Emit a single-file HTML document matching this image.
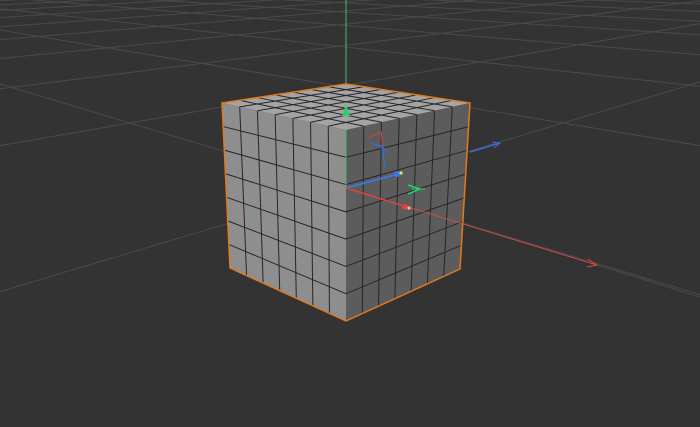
<!DOCTYPE html>
<html><head><meta charset="utf-8"><style>
html,body{margin:0;padding:0;background:#333;width:700px;height:427px;overflow:hidden;position:relative}
svg{display:block;overflow:hidden;position:absolute;left:0;top:0}
script{display:none}
</style></head><body>
<svg id="s" width="700" height="427" viewBox="0 0 700 427" xmlns="http://www.w3.org/2000/svg">
<rect width="700" height="427" fill="#333"/>
<g id="grid" stroke="#4a4a4a" stroke-width="1" fill="none"></g>
<line x1="597" y1="265" x2="700" y2="297" stroke="#4a4a4a" stroke-width="1"/>
<line x1="346" y1="0" x2="346" y2="188" stroke="#3fbf6f" stroke-width="1"/>
<g id="cube"></g>
<line x1="346" y1="188" x2="597" y2="265" stroke="#d04848" stroke-width="1"/>
<polyline points="588,259 597,265 587,267" fill="none" stroke="#d04848" stroke-width="1"/>
<line x1="470" y1="152" x2="500" y2="143" stroke="#3a6ad0" stroke-width="1.5"/>
<polyline points="492,142 500,143 494,148" fill="none" stroke="#3a6ad0" stroke-width="1"/>
<line x1="346" y1="130" x2="346" y2="188" stroke="#3fbf6f" stroke-width="1"/>
<polygon points="346,104 342,116 350,116" fill="#2ecc71"/>
<line x1="346" y1="188" x2="398" y2="174" stroke="#3a78e0" stroke-width="1.8"/>
<circle cx="397" cy="174" r="3" fill="#3a78e0"/><circle cx="401" cy="173" r="1.6" fill="#f0d890"/>
<line x1="346" y1="188" x2="404" y2="206" stroke="#e04040" stroke-width="1.5"/>
<circle cx="405" cy="207" r="3" fill="#e04040"/><circle cx="409" cy="208" r="1.6" fill="#f0c080"/>
<polyline points="368,138 381,132 383,146" fill="none" stroke="#d04040" stroke-width="1.2"/>
<polyline points="371,143 382,147 385,168" fill="none" stroke="#3a6ad0" stroke-width="1.5"/>
<line x1="380" y1="145" x2="388" y2="152" stroke="#3a6ad0" stroke-width="1.5"/>
<polyline points="408,185 420,189 408,194" fill="none" stroke="#2ecc71" stroke-width="1.5"/>
<line x1="412" y1="189" x2="425" y2="189" stroke="#2ecc71" stroke-width="1.2"/>
</svg>
<script>
(function(){
var NS="http://www.w3.org/2000/svg";
function solve(A,b){var n=b.length;for(var i=0;i<n;i++){var p=i;for(var r=i+1;r<n;r++)if(Math.abs(A[r][i])>Math.abs(A[p][i]))p=r;var t=A[i];A[i]=A[p];A[p]=t;var tb=b[i];b[i]=b[p];b[p]=tb;for(var r=i+1;r<n;r++){var f=A[r][i]/A[i][i];for(var c=i;c<n;c++)A[r][c]-=f*A[i][c];b[r]-=f*b[i];}}var x=new Array(n);for(var i=n-1;i>=0;i--){var s=b[i];for(var c=i+1;c<n;c++)s-=A[i][c]*x[c];x[i]=s/A[i][i];}return x;}
function homog(src,dst){var A=[],b=[];for(var i=0;i<4;i++){var u=src[i][0],v=src[i][1],x=dst[i][0],y=dst[i][1];A.push([u,v,1,0,0,0,-u*x,-v*x]);b.push(x);A.push([0,0,0,u,v,1,-u*y,-v*y]);b.push(y);}var h=solve(A,b);h.push(1);return h;}
var H=homog([[0,0],[-1,0],[0,1],[-1,2]],[[346,188],[130,123],[563,123],[480,62]]);
function P(u,v){var w=H[6]*u+H[7]*v+1;return [(H[0]*u+H[1]*v+H[2])/w,(H[3]*u+H[4]*v+H[5])/w,w];}
var w0=P(0,0)[2];
var g=document.getElementById("grid");
function line(pts){var d="",first=true;for(var i=0;i<pts.length;i++){var p=pts[i];if(p[2]/w0<0.2||p[0]<-200||p[0]>900||p[1]<-200||p[1]>700){first=true;continue;}d+=(first?"M":"L")+p[0].toFixed(1)+" "+p[1].toFixed(1);first=false;}if(d){var e=document.createElementNS(NS,"path");e.setAttribute("d",d);g.appendChild(e);}}
for(var k=-12;k<=12;k++){var a=[],b=[];for(var t=-12;t<=12;t+=0.02){a.push(P(k,t));b.push(P(t,k));}line(a);line(b);}
var c=document.getElementById("cube");
function poly(pts,fill,stroke,sw){var e=document.createElementNS(NS,"polygon");e.setAttribute("points",pts.map(function(p){return p[0]+","+p[1]}).join(" "));e.setAttribute("fill",fill);if(stroke){e.setAttribute("stroke",stroke);e.setAttribute("stroke-width",sw);e.setAttribute("stroke-linejoin","round");}c.appendChild(e);}
function lerp(a,b,t){return [a[0]+(b[0]-a[0])*t,a[1]+(b[1]-a[1])*t];}
function ln(a,b){var e=document.createElementNS(NS,"line");e.setAttribute("x1",a[0]);e.setAttribute("y1",a[1]);e.setAttribute("x2",b[0]);e.setAttribute("y2",b[1]);e.setAttribute("stroke","#262626");e.setAttribute("stroke-width","1");c.appendChild(e);}
function face(p0,p1,p2,p3,fill,n){poly([p0,p1,p2,p3],fill);for(var i=1;i<n;i++){var t=i/n;ln(lerp(p0,p1,t),lerp(p3,p2,t));ln(lerp(p0,p3,t),lerp(p1,p2,t));}}
var TB=[346,84],TL=[222,103],TR=[470,103],TN=[346,130],BL=[230,268],BN=[346,321],BR=[460,269];
face(TL,TB,TR,TN,"#a4a4a4",7);
face(TL,TN,BN,BL,"#8e8e8e",7);
face(TN,TR,BR,BN,"#5c5c5c",7);
poly([TB,TR,BR,BN,BL,TL],"none","#e07a1c",1.5);
})();
</script>
</body></html>
